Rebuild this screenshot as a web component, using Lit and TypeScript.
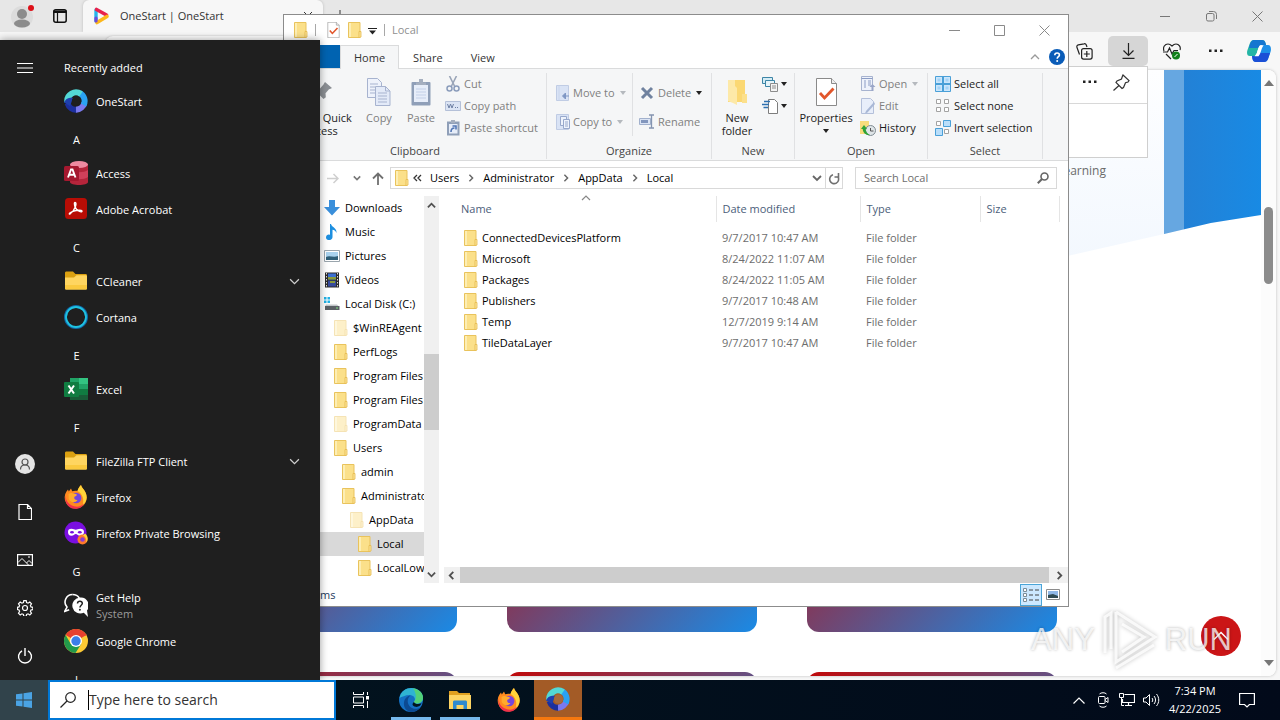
import { LitElement, html, svg, css, nothing } from "lit";
import { customElement } from "lit/decorators.js";
import { classMap } from "lit/directives/class-map.js";

/* ---------- shared icons ---------- */

const icon = (w: number, h: number, body: unknown, box = `0 0 ${w} ${h}`) =>
  html`<svg width=${w} height=${h} viewBox=${box} fill="none" aria-hidden="true">${body}</svg>`;

const folder = (faded = false, w = 14, h = 16) =>
  icon(
    w,
    h,
    svg`<g opacity=${faded ? 0.45 : 1}>
      <path d="M.5 .5h11.500v15H.5z" fill="#fbe08a" stroke="#e9c35c"/>
      <path d="M1 1h2v14H1z" fill="#fdeeb4"/>
      <path d="M11 9.500h2v5.500l-1.500 .5H11z" fill="#fde79c" stroke="#e5b94c" stroke-width=".8"/>
    </g>`,
    "0 0 14 16"
  );

const caret = (color = "#222") => icon(6, 4, svg`<path d="M0 0h6L3 4z" fill=${color}/>`);

const chevron = (dir: string, color = "#555", size = 10, weight = 1.5) => {
  const d: Record<string, string> = {
    up: "M1 7l4-4 4 4",
    down: "M1 3l4 4 4-4",
    left: "M7 1L3 5l4 4",
    right: "M3 1l4 4-4 4",
  };
  return icon(size, size, svg`<path d=${d[dir]} stroke=${color} stroke-width=${weight}/>`, "0 0 10 10");
};

const checkDoc = (w: number, h: number) =>
  icon(
    w,
    h,
    svg`<path d="M.5 .5h15l5 5v22H.5z" fill="#fff" stroke="#8a8a8a"/>
      <path d="M15.500 .5v5h5" fill="#eee" stroke="#8a8a8a"/>
      <path d="M4 15l4.500 5 9-9.500" stroke="#e2562b" stroke-width="2.800"/>`,
    "0 0 21 28"
  );

const oneStart = (size: number, hole: string) =>
  icon(
    size,
    size,
    svg`<path d="M3.600 14.500A8.700 8.700 0 0 0 13 20.600" stroke="#1c2f9e" stroke-width="6"/>
      <path d="M12 20.700A8.700 8.700 0 0 0 20.300 14" stroke="#7a79ee" stroke-width="6"/>
      <path d="M19.600 16A8.700 8.700 0 0 0 15.500 4" stroke="#2aa2f2" stroke-width="6"/>
      <path d="M3.300 13A8.700 8.700 0 0 1 17 5" stroke="#53d8d6" stroke-width="6"/>
      <path d="M0 13.500c2-4.500 6-5 9-4.500l-3 8z" fill="#1e3fae"/>
      <circle cx="12.500" cy="12" r="4.600" fill=${hole}/>`,
    "0 0 24 24"
  );

const firefox = (size: number) =>
  icon(
    size,
    size,
    svg`<path d="M2.500 6.500l1.500-2 .8 2L7 3.500l1.200 2.700C10 5.500 12 5.500 13.500 6c.6-2.500 2-4.500 3.500-6 .3 3 5.500 5.500 5.700 12.500A11 11 0 1 1 2.500 6.500z" fill="#ff8a1f"/>
      <path d="M17 0c.3 3 5.500 5.500 5.700 12.500-.2 3.500-2 6-4 7.500 1.500-5 .3-11-5.200-14 .6-2.500 2-4.500 3.500-6z" fill="#ffd43a"/>
      <path d="M1.500 10c0 7 4.500 10.500 9.500 11.500 4 .7 7-1 9-3-2 5-7 5.700-10 5.200C4.500 23 .5 18 1.500 10z" fill="#f2314b"/>
      <circle cx="12.200" cy="13" r="5.200" fill="#7446dd"/>
      <path d="M4.500 9c3-2 5 0 7.500 0 1.500 .3 1 2-1.500 2.700-1 2 .5 3.500 3 3.300-2 3.500-7.500 2.500-8.800-1z" fill="#ffab2c"/>`,
    "0 0 24 24"
  );

const logos: Record<string, unknown> = {
  onestart: oneStart(24, "#1f1f1f"),
  access: icon(
    24,
    24,
    svg`<path d="M6 3v18c0 4 18 4 18 0V3z" fill="#b5253b"/>
      <path d="M6 9c4 3 14 3 18 0v7c-4 3-14 3-18 0z" fill="#d0405a"/>
      <ellipse cx="15" cy="3.500" rx="9" ry="3.500" fill="#ee8aa0"/>
      <rect y="5" width="15" height="15" rx="1.500" fill="#a5182f"/>
      <path d="M4 16.500L7 8.500h1.500l3 8M5.300 13.800h4.600" stroke="#fff" stroke-width="1.900"/>`
  ),
  acrobat: icon(
    24,
    24,
    svg`<rect x="1" y="1" width="22" height="21" rx="3.500" fill="#b80d05"/>
      <path d="M11 5.500c2.500 0 0 8-5 11.500-1.500 .5-.5-1.500 3-2.700 4-1.300 9-1.600 9 0s-5.500-.3-7-4.600c-.7-2.200-.8-4.200 0-4.200z" stroke="#fff" stroke-width="1.400"/>`
  ),
  folder: icon(
    24,
    24,
    svg`<path d="M1 4c0-1 .5-1.500 1.500-1.500H9l2.500 2.500h10c1 0 1.500 .5 1.500 1.500v5H1z" fill="#dba011"/>
      <path d="M1 8.500h9l2.500-2.200h9c1 0 1.500 .5 1.500 1.500v11.200c0 1-.5 1.500-1.500 1.500h-19C1.500 20.500 1 20 1 19z" fill="#ffd560"/>
      <path d="M1 16h22v3c0 1-.5 1.500-1.500 1.500h-19C1.500 20.500 1 20 1 19z" fill="#fbc93f"/>`
  ),
  cortana: icon(24, 24, svg`<circle cx="12" cy="12" r="10.600" stroke="#1169a8" stroke-width="2.800"/><circle cx="12" cy="12" r="10" stroke="#1fc2e0" stroke-width="1.800"/>`),
  excel: icon(
    24,
    24,
    svg`<path d="M6 1h18v22H6z" fill="#21a366"/><path d="M15 1h9v6h-9z" fill="#33c481"/><path d="M6 12h9v11H6z" fill="#185c37"/>
      <path d="M15 12h9v6h-9z" fill="#107c41"/><path d="M15 18h9v5h-9z" fill="#185c37"/>
      <rect y="5" width="15" height="15" rx="1" fill="#107c41"/>
      <path d="M4.500 8.500l5.500 8M10 8.500l-5.500 8" stroke="#fff" stroke-width="2"/>`
  ),
  firefox: firefox(24),
  private: icon(
    24,
    24,
    svg`<circle cx="11.500" cy="11.500" r="11" fill="#7a0fe0"/>
      <path d="M7.500 7.800c2 0 3 1 4.300 1s2.500-1 4.500-1c2.500 0 3.700 1.200 3.700 3.200s-1.400 3.800-3.700 3.800c-2.200 0-3-1.800-4.500-1.800s-2.200 1.800-4.300 1.800C5 14.800 4 13 4 11s1-3.200 3.500-3.200z" fill="#fff"/>
      <ellipse cx="8" cy="11.300" rx="1.900" ry="1.300" fill="#7a0fe0"/><ellipse cx="15.800" cy="11.300" rx="1.900" ry="1.300" fill="#7a0fe0"/>
      <circle cx="18.500" cy="18.500" r="5" fill="#ff7a2b"/><circle cx="18.500" cy="18.500" r="2.300" fill="#8a3fd0"/><path d="M21 12.500c3 2 3.500 6 1.500 9-.2-4-1-6-3.500-7z" fill="#ffd43a"/>`
  ),
  help: icon(
    24,
    24,
    svg`<path d="M8.500 1.500a7.500 7.500 0 0 0-5.500 12.500l-2.300 4.500 4.500-1.700" stroke="#fff" stroke-width="1.600"/>
      <path d="M8.500 1.500c3 0 5.500 1.300 6.800 3.700" stroke="#fff" stroke-width="1.600"/>
      <path d="M16 4.500a8 8 0 1 0 3.800 15.200L24 24l-1-6.500A8 8 0 0 0 16 4.500z" fill="#fff"/>
      <path d="M13.500 10.500c.2-3 5-2.800 4.800 0-.1 1.700-2.400 1.800-2.400 4" stroke="#1f1f1f" stroke-width="1.500"/><circle cx="15.900" cy="16.800" r="1" fill="#1f1f1f"/>`
  ),
  chrome: icon(
    24,
    24,
    svg`<circle cx="12" cy="12" r="12" fill="#fcc934"/>
      <path d="M12 12L1.600 6A12 12 0 0 1 22.400 6z" fill="#e8402f"/>
      <path d="M12 12L6.800 15 1.600 6A12 12 0 0 0 11.500 24l5.700-9z" fill="#229a4b"/>
      <path d="M12 6h10.400" stroke="#e8402f" stroke-width="1"/>
      <circle cx="12" cy="12" r="6" fill="#fff"/><circle cx="12" cy="12" r="4.700" fill="#3c7de8"/>`
  ),
};

const base = css`
  * {
    box-sizing: border-box;
  }
  svg {
    display: block;
    flex: none;
  }
  button,
  input {
    font: inherit;
    color: inherit;
    background: none;
    border: 0;
    padding: 0;
    margin: 0;
    outline: 0;
  }
  button {
    text-align: left;
  }
  ul {
    list-style: none;
    margin: 0;
    padding: 0;
  }
`;

/* ---------- browser ---------- */

@customElement("browser-window")
export class BrowserWindow extends LitElement {
  static styles = [
    base,
    css`
      :host {
        display: flex;
        flex-direction: column;
        height: 100%;
        background: #f7f7f7;
        color: #333;
      }
      .strip {
        display: flex;
        align-items: stretch;
        height: 32px;
        background: #e7e7e7;
      }
      .profile,
      .tabs-menu {
        display: grid;
        place-items: center;
        width: 44px;
      }
      .tabs-menu {
        width: 32px;
        margin-right: 7px;
      }
      .tab {
        display: flex;
        align-items: center;
        gap: 10px;
        width: 240px;
        padding: 0 10px 0 11px;
        background: #f7f7f7;
        border-radius: 6px 6px 0 0;
        box-shadow: 0 0 3px #bbb;
      }
      .tab span {
        flex: 1;
      }
      .plus {
        width: 34px;
        display: grid;
        place-items: center;
      }
      .controls {
        display: flex;
        margin-left: auto;
      }
      .controls button {
        width: 46px;
        display: grid;
        place-items: center;
      }
      .bar {
        display: flex;
        align-items: center;
        height: 38px;
        padding-left: 105px;
        background: #f7f7f7;
      }
      .address {
        flex: 1;
        height: 30px;
        border-radius: 8px;
        background: #fff;
        box-shadow: 0 0 2px #bbb;
        margin-right: 20px;
      }
      .tool {
        display: grid;
        place-items: center;
        width: 44px;
        height: 30px;
      }
      .tool.on {
        width: 40px;
        margin: 0 2px;
        background: #d6d6d6;
        border-radius: 5px;
      }
      .tool.copilot {
        width: 42px;
      }
      .view {
        flex: 1;
        min-height: 0;
        display: flex;
        margin: 0 4px 4px;
        background: #fff;
        border-radius: 8px;
        box-shadow: 0 0 3px #bbb;
        overflow: hidden;
      }
      .page {
        flex: 1;
        min-width: 0;
        overflow: hidden;
      }
      .hero {
        display: flex;
        justify-content: flex-end;
        height: 190px;
        background: linear-gradient(#fdfeff, #f3f8fe);
        clip-path: polygon(0 0, 100% 0, 100% 145px, 96% 153px, 92.3% 164px, 84.6% 186px, 0 100%);
      }
      .hero p {
        margin: 92px 58px 0 0;
        font-size: 12px;
        line-height: 18px;
        color: #6b6b6b;
      }
      .photo {
        width: 97px;
        background: linear-gradient(to right, #66a7e1 20px, #2381d6 20px, #188ae4);
      }
      .cards {
        display: grid;
        grid-template-columns: repeat(3, 250px);
        justify-content: center;
        gap: 40px 50px;
        margin: 172px 2px 0 0;
      }
      .card {
        height: 200px;
        border-radius: 12px;
        background: linear-gradient(135deg, #c00808, #1a8ae5);
      }
      .scroll {
        width: 15px;
        display: flex;
        flex-direction: column;
        align-items: center;
        padding: 10px 0;
        background: #fcfcfc;
      }
      .thumb {
        width: 9px;
        height: 77px;
        margin: 121px 0 auto;
        border-radius: 5px;
        background: #8b8b8b;
      }
      .downloads {
        position: absolute;
        top: 66px;
        right: 132px;
        width: 320px;
        height: 92px;
        background: #fff;
        border: 1px solid #cfcfcf;
      }
      .downloads header {
        display: flex;
        justify-content: flex-end;
        align-items: center;
        gap: 16px;
        height: 37px;
        padding: 0 17px 6px 0;
        border-bottom: 1px solid #d8d8d8;
      }
      .top {
        position: absolute;
        right: 39px;
        bottom: 24px;
        width: 40px;
        height: 40px;
        border-radius: 50%;
        display: grid;
        place-items: center;
        background: #cb1517;
      }
    `,
  ];

  private dots = icon(14, 4, svg`<path d="M0 .5h2.500v2.500H0zM5.500 .5H8v2.500H5.500zM11 .5h2.500v2.500H11z" fill="#222"/>`);

  render() {
    return html`
      <header class="strip">
        <button class="profile" aria-label="Profile">
          ${icon(24, 26, svg`<circle cx="12" cy="14" r="11" fill="#dcdcdc"/><circle cx="12" cy="11" r="5" fill="#8c8c8c"/><ellipse cx="12" cy="20.500" rx="8" ry="4" fill="#8c8c8c"/><circle cx="21" cy="5" r="3" fill="#dd1018"/>`)}
        </button>
        <button class="tabs-menu" aria-label="Tab actions">
          ${icon(14, 14, svg`<rect x=".8" y=".8" width="12.400" height="12.400" rx="2" stroke="#111" stroke-width="1.500"/><path d="M1 2h12v1.500H1zM4.500 4v9" stroke="#111" fill="#111" stroke-width="1.200"/>`)}
        </button>
        <div class="tab">
          ${icon(16, 18, svg`<path d="M2 3v11" stroke="#26b4ea" stroke-width="3.400" stroke-linecap="round"/><path d="M2.500 2.500L12.500 8" stroke="#e8214c" stroke-width="3.600" stroke-linecap="round"/><path d="M3 15.500l10-6" stroke="#fdb71a" stroke-width="3.600" stroke-linecap="round"/><path d="M2 11v3" stroke="#6f4bd8" stroke-width="3.200" stroke-linecap="round"/>`)}
          <span>OneStart | OneStart</span>
          ${icon(10, 10, svg`<path d="M1 1l8 8M9 1L1 9" stroke="#333"/>`)}
        </div>
        <button class="plus" aria-label="New tab">${icon(12, 12, svg`<path d="M6 0v12M0 6h12" stroke="#333"/>`)}</button>
        <div class="controls">
          <button aria-label="Minimize">${icon(10, 10, svg`<path d="M0 5.500h10" stroke="#777"/>`)}</button>
          <button aria-label="Restore">${icon(11, 11, svg`<rect x=".5" y="2.500" width="7.500" height="7.500" rx="1.500" stroke="#777"/><path d="M3 .5h4.500a3 3 0 0 1 3 3V8" stroke="#777"/>`)}</button>
          <button aria-label="Close">${icon(11, 11, svg`<path d="M.5 .5l10 10M10.500 .5l-10 10" stroke="#777"/>`)}</button>
        </div>
      </header>
      <div class="bar">
        <div class="address"></div>
        <button class="tool" aria-label="Collections">
          ${icon(17, 17, svg`<rect x="5.600" y="5.600" width="10.500" height="10.500" rx="2" stroke="#222" stroke-width="1.200"/><path d="M10.800 8v6M7.800 11h6" stroke="#222" stroke-width="1.200"/><path d="M3.500 11.500L1 4.500a2 2 0 0 1 1.300-2.700L8 .8a2 2 0 0 1 2.300 1.200l.7 2" stroke="#222" stroke-width="1.200"/>`)}
        </button>
        <button class="tool on" aria-label="Downloads">
          ${icon(13, 16, svg`<path d="M6.500 0v12M1.500 7.500l5 5 5-5M.5 15.300h12" stroke="#222" stroke-width="1.200"/>`)}
        </button>
        <button class="tool" aria-label="Browser essentials">
          ${icon(18, 17, svg`<path d="M1 8C-.5 4 2 1 5 1c2 0 3 1 4 2 1-1 2-2 4-2 3 0 5 3 4 6M3 11l5 5" stroke="#222" stroke-width="1.200"/><path d="M0 9h4.500l2-4 2.500 6 2-3.500h4" stroke="#222" stroke-width="1.200"/><circle cx="13" cy="12.500" r="4" fill="#12801a"/><path d="M11.500 14l3-3" stroke="#fff"/>`)}
        </button>
        <button class="tool" aria-label="Settings">${this.dots}</button>
        <button class="tool copilot" aria-label="Copilot">
          ${icon(24, 24, svg`<path d="M7 1h8c2 0 3 1 3.500 3L19 6h-4c-2 0-3 1-3.600 3L9 17H3c-3 0-3.500-3-2.500-6L3 4c.8-2 2-3 4-3z" fill="#23b5a6"/><path d="M7 1h8c2 0 3 1 3.500 3L19 6h-4c-2 0-3 1-3.600 3H2l1-4c.8-2 2-4 4-4z" fill="#1576d0"/><path d="M17 23H9c-2 0-3-1-3.500-3L5 17h4c2 0 3-1 3.600-3L15 6h6c3 0 3.500 4 2.500 7L21 20c-.8 2-2 3-4 3z" fill="#1d8fe8"/><path d="M17 23H9c-2 0-3-1-3.500-3L5 17h4c2 0 3-1 3.600-3H23l-2 6c-.8 2-2 3-4 3z" fill="#1b4fd6"/><path d="M13.500 7.500c-1.500 1.500-1.600 6-3.500 8.500h1c1.500-1.500 2-6 3.500-8.500z" stroke="#fff" stroke-width="2.400"/>`)}
        </button>
      </div>
      <div class="view">
        <main class="page">
          <section class="hero">
            <p>Learning</p>
            <div class="photo"></div>
          </section>
          <section class="cards">${[0, 1, 2, 3, 4, 5].map(() => html`<article class="card"></article>`)}</section>
        </main>
        <div class="scroll">
          ${icon(10, 6, svg`<path d="M5 0l5 6H0z" fill="#777"/>`)}
          <div class="thumb"></div>
          ${icon(10, 6, svg`<path d="M5 6l5-6H0z" fill="#777"/>`)}
        </div>
      </div>
      <aside class="downloads">
        <header>
          ${this.dots}
          ${icon(17, 17, svg`<path d="M10 1l6 5.500-1 1.500-2.500 .8-2 4.700-1.500 1L3 8.500l1-1.500 4.500-2L9.500 2zM6 11.500L.5 16.500" stroke="#333" stroke-width="1.200"/>`)}
        </header>
      </aside>
      <button class="top" aria-label="Back to top">${icon(16, 10, svg`<path d="M1 8.500l7-7 7 7" stroke="#fff" stroke-width="1.500"/>`)}</button>
    `;
  }
}

/* ---------- file explorer ---------- */

const ribbonIcons: Record<string, unknown> = {
  pin: icon(24, 28, svg`<path d="M16 4l7 6-2 1-1 .3-3.500 4 .3 4-2.300 1.700-4-4L4 23l5-6.800-3.500-4L7 10l4 .5 3.500-4 .5-1z" fill="#8b8f94"/>`),
  copy: icon(
    24,
    28,
    svg`<g stroke="#a7b3cf"><path d="M.5 .5h10l4 4v15H.5z" fill="#eef2fb"/><path d="M8.500 8.500h10l4.500 4.500v14.500H8.500z" fill="#e3eaf8"/><path d="M18.500 8.500V13H23M3 6h8M3 9h5M3 12h5M3 15h5M11 15h9M11 18h9M11 21h9M11 24h9"/></g>`
  ),
  paste: icon(
    22,
    28,
    svg`<rect x="1.500" y="4" width="19" height="23.500" rx="1" fill="#8f9fb8"/><path d="M4 7h14v17H4z" fill="#e6edf9"/><path d="M6 4.500h10V7H6zM9 1h4v4H9z" fill="#a5afbf"/><path d="M6 11h10M6 14h10M6 17h10M6 20h10" stroke="#c3d0e8"/>`
  ),
  cut: icon(16, 16, svg`<path d="M4.500 0l5 10M11.500 0l-5 10" stroke="#9aa5b8" stroke-width="1.600"/><circle cx="4.500" cy="12.500" r="2.500" stroke="#8b9cbb" stroke-width="1.500"/><circle cx="11.500" cy="12.500" r="2.500" stroke="#8b9cbb" stroke-width="1.500"/>`),
  path: icon(16, 16, svg`<path d="M.5 3.500h15v9H.5z" fill="#dbe4f4" stroke="#b4c0d8"/><path d="M2.500 6l1.500 4 1.500-4L7 10l1.500-4M10 9.500h1M12 9.500h1" stroke="#6d7fa3"/>`),
  shortcut: icon(16, 16, svg`<rect x="2" y="1.500" width="12.500" height="14" fill="#8f9fb8"/><path d="M4 4h8.500v9.500H4z" fill="#e6edf9"/><path d="M6 0h4v3H6z" fill="#a5afbf"/><path d="M6 12c0-3 1-4 3.500-4M7.500 6H11v3.500" stroke="#5276b5" stroke-width="1.600"/>`),
  move: icon(14, 16, svg`<path d="M.5 .5h12v15H.5z" fill="#d9e3f5" stroke="#c0cce4"/><path d="M3 .5v15" stroke="#c9d5ec"/><path d="M13 11H8M9.500 8L6.500 11l3 3z" stroke="#7f97c4" fill="#7f97c4"/>`),
  copyto: icon(14, 16, svg`<path d="M.5 .5h12v15H.5z" fill="#d9e3f5" stroke="#c0cce4"/><path d="M4.500 2.500h6v9h-6z" fill="#eef3fc" stroke="#98a9cc"/><path d="M7.500 5.500h6v9h-6z" fill="#eef3fc" stroke="#98a9cc"/><path d="M9 8h3M9 10h3M9 12h3" stroke="#98a9cc"/>`),
  del: icon(16, 16, svg`<path d="M3 3l10 10M13 3L3 13" stroke="#70829f" stroke-width="3"/>`),
  rename: icon(16, 16, svg`<path d="M.5 4.500h11v6H.5z" fill="#dbe4f4" stroke="#a2b1cd"/><path d="M2 6h7v3H2z" fill="#8296bd"/><path d="M10 1h5M12.500 1v13M10 14h5" stroke="#8494b0" stroke-width="1.300"/>`),
  newfolder: icon(20, 28, svg`<path d="M1 2h17v22H1z" fill="#fbd873"/><path d="M1 2h7v6l2 2v17l-4-2-5-2z" fill="#fde9a8"/><path d="M15 16h5v9h-5z" fill="#fce08c"/>`),
  newitem: icon(16, 16, svg`<path d="M.5 1.500h10v6H.5z" fill="#d4ecf5" stroke="#3d85a6"/><path d="M3.500 4.500h9v6h-9z" fill="#e6f4fa" stroke="#3d85a6"/><path d="M8.500 7.500h7v8h-7z" fill="#f4f4f4" stroke="#8c8c8c"/><path d="M10 10h4M10 12h4" stroke="#8c8c8c"/>`),
  easy: icon(16, 16, svg`<path d="M6.500 1.500h6l3 3v11h-9z" fill="#fff" stroke="#7d7d7d"/><path d="M2 3.500h6M0 6.500h7M1.500 9.500H6" stroke="#2d6fb0" stroke-width="1.400"/>`),
  check: checkDoc(21, 28),
  open: icon(16, 16, svg`<path d="M1.500 .5h11v14h-11z" fill="#eef2fb" stroke="#a7b3cf"/><path d="M1.500 2.500h11M4 5h2M4 7h2M4 9h2M4 11h2M8 5h3M8 7h3M8 9h3" stroke="#8b9cc4"/><path d="M12.500 8l3 3h-2v4h-2v-4h-2z" fill="#9aa6c8"/>`),
  edit: icon(16, 16, svg`<path d="M1.500 .5h9l3 3v12h-12z" fill="#e8eefa" stroke="#b4c0da"/><path d="M14 4L6 13l-1 2.500 2.500-1L15 6z" fill="#a9b8d6"/>`),
  history: icon(16, 16, svg`<path d="M0 1h9v13H0z" fill="#f8dc7c"/><circle cx="10.500" cy="10.500" r="5" fill="#dfe5e8" stroke="#7f8b92"/><path d="M10.500 8v3h3" stroke="#555"/><path d="M1 9l3-4 3 4H5.500c.5 3 2 5 4.500 6-4 .5-7-2-7.300-6z" fill="#2fa338"/>`),
  all: icon(16, 16, svg`<path d="M.5 .5h15v15H.5z" fill="#cbe6fb" stroke="#4aa0d8"/><path d="M8 0v16M0 8h16" stroke="#4aa0d8" stroke-width="2"/><path d="M2.500 2.500h3v3h-3zM10.500 2.500h3v3h-3zM2.500 10.500h3v3h-3zM10.500 10.500h3v3h-3z" fill="#a4d3f7"/>`),
  none: icon(16, 16, svg`<path d="M1.500 1.500h4v4h-4zM9.500 1.500h4v4h-4zM1.500 9.500h4v4h-4zM9.500 9.500h4v4h-4z" stroke="#a3a3a3" fill="#fff"/>`),
  invert: icon(16, 16, svg`<path d="M1.500 1.500h4v4h-4zM9.500 9.500h4v4h-4z" stroke="#a3a3a3" fill="#fff"/><path d="M8.500 .5h7v6h-7zM.5 8.500h7v7h-7z" stroke="#4aa0d8" fill="#b9defa"/>`),
};

type Node = { name: string; level: number; kind?: string; faded?: boolean; current?: boolean };

@customElement("file-explorer")
export class FileExplorer extends LitElement {
  static styles = [
    base,
    css`
      :host {
        display: flex;
        flex-direction: column;
        background: #fff;
        border: 1px solid #8c8c8c;
        color: #1c1c1c;
      }
      .title {
        display: flex;
        align-items: center;
        height: 30px;
        padding: 0 1px 0 10px;
        color: #8f8f8f;
      }
      .title .rule {
        width: 1px;
        height: 12px;
        background: #a8a8a8;
        margin: 0 7px;
      }
      .title .check {
        margin: 0 8px 0 4px;
      }
      .title .more {
        margin: 2px 0 0 6px;
      }
      .controls {
        display: flex;
        margin-left: auto;
      }
      .controls button {
        width: 45px;
        height: 28px;
        display: grid;
        place-items: center;
      }
      .tabs {
        display: flex;
        height: 24px;
        border-bottom: 1px solid #dadbdc;
        color: #333;
      }
      .tabs button {
        height: 24px;
        padding: 0 13px;
        border: 1px solid transparent;
        border-width: 1px 1px 0;
      }
      .tabs .file {
        width: 56px;
        height: 23px;
        background: #0063b1;
        color: #fff;
      }
      .tabs .home {
        background: #f5f6f7;
        border-color: #dadbdc;
      }
      .tabs .end {
        display: flex;
        align-items: center;
        gap: 9px;
        margin-left: auto;
        padding-right: 3px;
      }
      .ribbon {
        display: flex;
        height: 92px;
        padding: 4px 0 0;
        background: #f5f6f7;
        border-bottom: 1px solid #dadbdc;
      }
      .group {
        display: flex;
        flex-direction: column;
        justify-content: space-between;
        height: 86px;
        border-right: 1px solid #e0e1e3;
      }
      .body {
        display: flex;
      }
      .caption {
        text-align: center;
        line-height: 16px;
        color: #444;
      }
      .clipboard {
        width: 263px;
      }
      .organize {
        width: 165px;
      }
      .new {
        width: 83px;
      }
      .open {
        width: 133px;
      }
      .select {
        width: 115px;
      }
      .big {
        display: flex;
        flex-direction: column;
        align-items: center;
        padding-top: 5px;
        width: 42px;
        line-height: 13px;
        text-align: center;
        white-space: nowrap;
      }
      .big svg:first-child {
        margin-bottom: 5px;
      }
      .big.wide {
        width: 74px;
      }
      .big.mid {
        width: 50px;
      }
      .big.props {
        width: 62px;
      }
      .big svg + span + svg {
        margin-top: 5px;
      }
      .list {
        display: flex;
        flex-direction: column;
        padding-left: 3px;
      }
      .list button {
        display: flex;
        align-items: center;
        gap: 3px;
        height: 22px;
        white-space: nowrap;
      }
      .new .list {
        padding-left: 0;
      }
      .select .list {
        padding-left: 7px;
      }
      .list.tall {
        padding: 5px 0 0 9px;
      }
      .list.tall button {
        height: 29px;
      }
      .list.first {
        width: 85px;
      }
      .list.second {
        padding-left: 6px;
        border-left: 1px solid #e0e1e3;
      }
      .list span {
        margin-right: 2px;
      }
      .off {
        color: #808080;
      }
      .nav {
        display: flex;
        align-items: center;
        height: 34px;
        padding: 0 11px 0 36px;
      }
      .nav > button {
        display: grid;
        place-items: center;
        width: 21px;
        height: 22px;
      }
      .nav .fwd {
        width: 26px;
      }
      .crumbs {
        flex: 1;
        display: flex;
        align-items: center;
        height: 22px;
        margin: 0 12px 0 2px;
        padding-left: 4px;
        border: 1px solid #d9d9d9;
      }
      .crumbs .trail {
        display: flex;
        align-items: center;
        gap: 8px;
        margin: 0 auto 0 4px;
        color: #000;
      }
      .crumbs .drop {
        padding-right: 3px;
      }
      .crumbs .reload {
        display: grid;
        place-items: center;
        width: 17px;
        height: 20px;
        border-left: 1px solid #d9d9d9;
      }
      .search {
        display: flex;
        align-items: center;
        width: 202px;
        height: 22px;
        padding: 0 7px 0 8px;
        border: 1px solid #d9d9d9;
      }
      .search input {
        flex: 1;
        min-width: 0;
      }
      .search input::placeholder {
        color: #6d6d6d;
        opacity: 1;
      }
      .main {
        flex: 1;
        min-height: 0;
        display: flex;
        padding-top: 1px;
      }
      .tree {
        width: 140px;
        overflow: hidden;
      }
      .tree li {
        display: flex;
        align-items: center;
        gap: 5px;
        height: 24px;
        padding-left: 40px;
        white-space: nowrap;
        color: #000;
      }
      .tree .l1 {
        padding-left: 50px;
      }
      .tree .l2 {
        padding-left: 58px;
      }
      .tree .l3 {
        padding-left: 66px;
      }
      .tree .l4 {
        padding-left: 74px;
      }
      .tree .current {
        background: #d9d9d9;
      }
      .vbar {
        display: flex;
        flex-direction: column;
        align-items: center;
        width: 15px;
        padding: 5px 0 4px;
        background: #f0f0f0;
      }
      .vbar i {
        width: 15px;
        height: 76px;
        margin: 144px 0 auto;
        background: #cdcdcd;
      }
      .files {
        flex: 1;
        min-width: 0;
        display: flex;
        flex-direction: column;
        padding-left: 5px;
      }
      table {
        width: 616px;
        table-layout: fixed;
        border-collapse: collapse;
        margin-bottom: auto;
      }
      th {
        height: 26px;
        padding: 0 0 0 6px;
        text-align: left;
        font-weight: 400;
        color: #4c607a;
        border-right: 1px solid #e5e5e5;
      }
      th:first-child {
        padding-left: 17px;
      }
      .sort {
        position: absolute;
        left: 297px;
        top: 178px;
      }
      .c1 {
        width: 272px;
      }
      .c2 {
        width: 144px;
      }
      .c3 {
        width: 120px;
      }
      td {
        height: 21px;
        padding: 0 0 0 6px;
        line-height: 16px;
        color: #6d6d6d;
      }
      tbody::before {
        content: "";
        display: block;
        height: 5px;
      }
      .name {
        display: flex;
        align-items: center;
        gap: 4px;
        padding-left: 14px;
        color: #000;
      }
      .hbar {
        display: flex;
        align-items: center;
        justify-content: space-between;
        height: 16px;
        padding: 0 4px 0 3px;
        background: #f0f0f0;
      }
      .hbar i {
        flex: 1;
        height: 16px;
        margin: 0 6px 0 4px;
        background: #cdcdcd;
      }
      .status {
        display: flex;
        align-items: center;
        height: 23px;
        padding: 0 4px 0 14px;
        color: #23395b;
      }
      .status .details {
        display: grid;
        place-items: center;
        width: 22px;
        height: 22px;
        margin-left: auto;
        background: #cce8ff;
        border: 1px solid #4aa5d8;
      }
      .status .thumbs {
        display: grid;
        place-items: center;
        width: 22px;
        height: 22px;
      }
    `,
  ];

  private tree: Node[] = [
    { name: "Downloads", level: 0, kind: "down" },
    { name: "Music", level: 0, kind: "music" },
    { name: "Pictures", level: 0, kind: "pic" },
    { name: "Videos", level: 0, kind: "video" },
    { name: "Local Disk (C:)", level: 0, kind: "disk" },
    { name: "$WinREAgent", level: 1, faded: true },
    { name: "PerfLogs", level: 1 },
    { name: "Program Files", level: 1 },
    { name: "Program Files (x86)", level: 1 },
    { name: "ProgramData", level: 1, faded: true },
    { name: "Users", level: 1 },
    { name: "admin", level: 2 },
    { name: "Administrator", level: 2 },
    { name: "AppData", level: 3, faded: true },
    { name: "Local", level: 4, current: true },
    { name: "LocalLow", level: 4 },
  ];

  private files = [
    ["ConnectedDevicesPlatform", "9/7/2017 10:47 AM"],
    ["Microsoft", "8/24/2022 11:07 AM"],
    ["Packages", "8/24/2022 11:05 AM"],
    ["Publishers", "9/7/2017 10:48 AM"],
    ["Temp", "12/7/2019 9:14 AM"],
    ["TileDataLayer", "9/7/2017 10:47 AM"],
  ];

  private kinds: Record<string, unknown> = {
    down: icon(16, 16, svg`<path d="M5 0h6v7h5l-8 8.500L0 7h5z" fill="#3a8fdb"/>`),
    music: icon(16, 16, svg`<path d="M7 0c.5 3 6 4 5.500 9-.7-2-2-3-4-3.300V13c0 4-6.500 4-6.500 .5C2 11 4.500 10 6 11V0z" fill="#1d8fe0"/>`),
    pic: icon(16, 16, svg`<path d="M.5 2.500h15v11H.5z" fill="#fff" stroke="#9aa5ad"/><path d="M2 4h12v8H2z" fill="#a9d2ee"/><path d="M2 9c4-2 7 1 12-1v4H2z" fill="#2f5f78"/>`),
    video: icon(16, 16, svg`<path d="M1 .5h14v15H1z" fill="#2b2b2b"/><path d="M4 1.500h8v6H4z" fill="#3c6fd0"/><path d="M4 8.500h8v6H4z" fill="#364a9c"/><path d="M4 5h8v2.500H4zM6 9h5v2H6z" fill="#8a9a3a"/><path d="M2.500 1v15M13.500 1v15" stroke="#ddd" stroke-dasharray="1.500 1.500"/>`),
    disk: icon(16, 16, svg`<path d="M0 1h2.500v2.500H0zM3.500 1H6v2.500H3.500zM0 4.500h2.500V7H0zM3.500 4.500H6V7H3.500z" fill="#21b2e6"/><path d="M2 8.500h11l2 2H1z" fill="#c3c7ca"/><path d="M1 10h14.500v4H1z" fill="#5b6166"/><path d="M12 12h2" stroke="#7fe07f"/>`),
  };

  private row(name: string, label: string, off = false, drop = false) {
    return html`<button class=${classMap({ off })}>
      ${ribbonIcons[name]}<span>${label}</span>${drop ? caret(off ? "#b5b9be" : "#333") : nothing}
    </button>`;
  }

  render() {
    return html`
      <header class="title">
        ${folder()}
        <div class="rule"></div>
        <div class="check">${checkDoc(13, 16)}</div>
        ${folder()}
        <div class="more">${icon(9, 7, svg`<path d="M0 .5h9" stroke="#222"/><path d="M1 2.500h7L4.500 6.500z" fill="#222"/>`)}</div>
        <div class="rule"></div>
        <span>Local</span>
        <div class="controls">
          <button aria-label="Minimize">${icon(11, 11, svg`<path d="M0 5.500h11" stroke="#8a8a8a"/>`)}</button>
          <button aria-label="Maximize">${icon(11, 11, svg`<path d="M.5 .5h10v10H.5z" stroke="#8a8a8a"/>`)}</button>
          <button aria-label="Close">${icon(11, 11, svg`<path d="M.5 .5l10 10M10.500 .5l-10 10" stroke="#8a8a8a"/>`)}</button>
        </div>
      </header>
      <nav class="tabs">
        <button class="file">File</button><button class="home">Home</button><button>Share</button><button>View</button>
        <div class="end">
          ${chevron("up", "#9a9a9a", 10, 1.3)}
          ${icon(16, 16, svg`<circle cx="8" cy="8" r="8" fill="#0a5cb8"/><path d="M5.800 6.200c0-3 4.600-2.800 4.600-.2 0 1.700-2.200 1.700-2.200 3.800" stroke="#fff" stroke-width="1.600"/><circle cx="8.200" cy="12" r="1" fill="#fff"/>`)}
        </div>
      </nav>
      <section class="ribbon">
        <div class="group clipboard">
          <div class="body">
            <button class="big wide">${ribbonIcons.pin}<span>Pin to Quick<br />access</span></button>
            <button class="big off">${ribbonIcons.copy}<span>Copy</span></button>
            <button class="big off">${ribbonIcons.paste}<span>Paste</span></button>
            <div class="list">
              ${this.row("cut", "Cut", true)} ${this.row("path", "Copy path", true)} ${this.row("shortcut", "Paste shortcut", true)}
            </div>
          </div>
          <div class="caption">Clipboard</div>
        </div>
        <div class="group organize">
          <div class="body">
            <div class="list tall first">${this.row("move", "Move to", true, true)} ${this.row("copyto", "Copy to", true, true)}</div>
            <div class="list tall second">
              <button class="off">${ribbonIcons.del}<span>Delete</span>${caret()}</button>
              ${this.row("rename", "Rename", true)}
            </div>
          </div>
          <div class="caption">Organize</div>
        </div>
        <div class="group new">
          <div class="body">
            <button class="big mid">${ribbonIcons.newfolder}<span>New<br />folder</span></button>
            <div class="list">
              <button aria-label="New item">${ribbonIcons.newitem}${caret()}</button>
              <button aria-label="Easy access">${ribbonIcons.easy}${caret()}</button>
            </div>
          </div>
          <div class="caption">New</div>
        </div>
        <div class="group open">
          <div class="body">
            <button class="big props">${ribbonIcons.check}<span>Properties</span>${caret()}</button>
            <div class="list">${this.row("open", "Open", true, true)} ${this.row("edit", "Edit", true)} ${this.row("history", "History")}</div>
          </div>
          <div class="caption">Open</div>
        </div>
        <div class="group select">
          <div class="body">
            <div class="list">
              ${this.row("all", "Select all")} ${this.row("none", "Select none")} ${this.row("invert", "Invert selection")}
            </div>
          </div>
          <div class="caption">Select</div>
        </div>
      </section>
      <div class="nav">
        <button class="fwd" aria-label="Forward">${icon(12, 11, svg`<path d="M0 5.500h11M6.500 1l4.500 4.500L6.500 10" stroke="#cfcfcf" stroke-width="1.500"/>`)}</button>
        <button aria-label="Recent locations">${chevron("down", "#777", 8, 2)}</button>
        <button aria-label="Up">${icon(12, 13, svg`<path d="M6 13V2M1 6.500l5-5 5 5" stroke="#707070" stroke-width="1.800"/>`)}</button>
        <div class="crumbs">
          ${folder()}
          <div class="trail">
            ${icon(9, 8, svg`<path d="M4 1L1 4l3 3M8 1L5 4l3 3" stroke="#333" stroke-width="1.300"/>`)}
            <span>Users</span>${chevron("right", "#666", 8, 1.8)}
            <span>Administrator</span>${chevron("right", "#666", 8, 1.8)}
            <span>AppData</span>${chevron("right", "#666", 8, 1.8)}
            <span>Local</span>
          </div>
          <div class="drop">${chevron("down", "#666", 10, 1.8)}</div>
          <button class="reload" aria-label="Refresh">
            ${icon(12, 13, svg`<path d="M9.800 4.500A4.500 4.500 0 1 1 5 2.800M10.500 1v4H6.500" stroke="#707070" stroke-width="1.600"/>`)}
          </button>
        </div>
        <label class="search">
          <input type="text" placeholder="Search Local" aria-label="Search Local" />
          ${icon(12, 12, svg`<circle cx="7.500" cy="4.500" r="3.500" stroke="#666" stroke-width="1.600"/><path d="M5 7L.8 11.200" stroke="#666" stroke-width="2"/>`)}
        </label>
      </div>
      <div class="main">
        <ul class="tree">
          ${this.tree.map(
            (n) => html`<li class=${classMap({ [`l${n.level}`]: true, current: !!n.current })}>
              ${n.kind ? this.kinds[n.kind] : folder(n.faded)}<span>${n.name}</span>
            </li>`
          )}
        </ul>
        <div class="vbar">${chevron("up", "#505050", 9, 2)}<i></i>${chevron("down", "#505050", 9, 2)}</div>
        <div class="files">
          <table>
            <colgroup>
              <col class="c1" /><col class="c2" /><col class="c3" /><col />
            </colgroup>
            <thead>
              <tr><th>Name</th><th>Date modified</th><th>Type</th><th>Size</th></tr>
            </thead>
            <tbody>
              ${this.files.map(
                ([name, date]) => html`<tr>
                  <td><div class="name">${folder()}<span>${name}</span></div></td>
                  <td>${date}</td>
                  <td>File folder</td>
                  <td></td>
                </tr>`
              )}
            </tbody>
          </table>
          <div class="sort">${chevron("up", "#888", 10, 1.2)}</div>
          <div class="hbar">${chevron("left", "#505050", 9, 2)}<i></i>${chevron("right", "#505050", 9, 2)}</div>
        </div>
      </div>
      <footer class="status">
        <span>6 items</span>
        <button class="details" aria-label="Details view">
          ${icon(16, 14, svg`<path d="M.5 .5h3v3h-3zM.5 5.500h3v3h-3zM.5 10.500h3v3h-3z" stroke="#7b8c98" fill="#fff"/><path d="M6 2h4M12 2h4M6 7h4M12 7h4M6 12h4M12 12h4" stroke="#444"/>`)}
        </button>
        <button class="thumbs" aria-label="Large icons view">
          ${icon(14, 11, svg`<path d="M.5 .5h13v10H.5z" fill="#fff" stroke="#8b8b8b"/><path d="M2 2h10v7H2z" fill="#8fb7e6"/><path d="M2 6l5-1 5 2v2H2z" fill="#2f4a52"/>`)}
        </button>
      </footer>
    `;
  }
}

/* ---------- start menu ---------- */

@customElement("start-menu")
export class StartMenu extends LitElement {
  static styles = [
    base,
    css`
      :host {
        display: flex;
        background: #1f1f1f;
        color: #fff;
        box-shadow: 0 0 8px rgba(0, 0, 0, 0.4);
        overflow: hidden;
      }
      .rail {
        display: flex;
        flex-direction: column;
        width: 48px;
        padding-top: 4px;
      }
      .rail button {
        display: grid;
        place-items: center;
        height: 48px;
        width: 50px;
      }
      .rail .menu {
        margin-bottom: auto;
      }
      .apps {
        flex: 1;
        padding: 12px 20px 0 16px;
      }
      h2 {
        margin: 0;
        font: inherit;
        line-height: 32px;
      }
      h3 {
        margin: 0;
        height: 36px;
        width: 25px;
        font: inherit;
        line-height: 39px;
        text-align: center;
      }
      .app {
        display: flex;
        align-items: center;
        gap: 8px;
        width: 100%;
        height: 36px;
        padding-bottom: 2px;
      }
      .label {
        flex: 1;
        padding-top: 2px;
        line-height: 16px;
      }
      .label small {
        display: block;
        font-size: 11px;
        color: #9b9b9b;
      }
    `,
  ];

  private apps: [string, [string, string, string?][]][] = [
    ["Recently added", [["OneStart", "onestart"]]],
    ["A", [["Access", "access"], ["Adobe Acrobat", "acrobat"]]],
    ["C", [["CCleaner", "folder"], ["Cortana", "cortana"]]],
    ["E", [["Excel", "excel"]]],
    ["F", [["FileZilla FTP Client", "folder"], ["Firefox", "firefox"], ["Firefox Private Browsing", "private"]]],
    ["G", [["Get Help", "help", "System"], ["Google Chrome", "chrome"]]],
    ["I", []],
  ];

  render() {
    return html`
      <nav class="rail">
        <button class="menu" aria-label="Menu">${icon(16, 10, svg`<path d="M0 .5h16M0 5h16M0 9.500h16" stroke="#fff"/>`)}</button>
        <button aria-label="Account">${icon(20, 20, svg`<circle cx="10" cy="10" r="10" fill="#e4e4e4"/><circle cx="10" cy="8" r="3" stroke="#555" stroke-width="1.200"/><path d="M5.500 15.500c0-6 9-6 9 0" stroke="#555" stroke-width="1.200"/>`)}</button>
        <button aria-label="Documents">${icon(14, 16, svg`<path d="M1 .5h8.500l4 4v11H1zM9.500 .5v4h4" stroke="#fff" stroke-width="1.200"/>`)}</button>
        <button aria-label="Pictures">${icon(16, 12, svg`<path d="M.6 .6h14.800v10.800H.6z" stroke="#fff" stroke-width="1.200"/><path d="M1 8.500l4-4 6.500 6.500M9.500 9l2.500-2.500 3 3" stroke="#fff"/><path d="M11 3h2" stroke="#fff"/>`)}</button>
        <button aria-label="Settings">
          ${icon(16, 16, svg`<circle cx="8" cy="8" r="2.500" stroke="#fff" stroke-width="1.200"/><path d="M6.800 .6h2.400l.4 2 1.500.6 1.700-1.100 1.700 1.700-1.100 1.700.6 1.400 1.900.4v2.300l-1.900.4-.6 1.500 1.100 1.700-1.700 1.700-1.700-1.100-1.500.6-.4 2H6.800l-.4-2-1.500-.6-1.700 1.100-1.700-1.700 1.100-1.700-.6-1.500-1.500-.4V7.300L2 6.900l.6-1.400-1.100-1.700 1.700-1.700 1.700 1.100 1.500-.6z" stroke="#fff" stroke-width="1.200"/>`)}
        </button>
        <button aria-label="Power">${icon(16, 16, svg`<path d="M5 2.800a6.500 6.500 0 1 0 6 0M8 0v8" stroke="#fff" stroke-width="1.400"/>`)}</button>
      </nav>
      <div class="apps">
        ${this.apps.map(
          ([head, list], i) => html`${i === 0 ? html`<h2>${head}</h2>` : html`<h3>${head}</h3>`}
          ${list.map(
            ([name, logo, sub]) => html`<button class="app">
              ${logos[logo]}<span class="label">${name}${sub ? html`<small>${sub}</small>` : nothing}</span>
              ${logo === "folder" ? chevron("down", "#d0d0d0", 11, 1.1) : nothing}
            </button>`
          )}`
        )}
      </div>
    `;
  }
}

/* ---------- taskbar ---------- */

@customElement("task-bar")
export class TaskBar extends LitElement {
  static styles = [
    base,
    css`
      :host {
        display: flex;
        height: 40px;
        background: linear-gradient(to right, #02151f, #020a1a);
        color: #fff;
      }
      button {
        display: grid;
        place-items: center;
        width: 49px;
        height: 40px;
      }
      .start {
        width: 48px;
        background: #31434b;
      }
      .search {
        display: flex;
        align-items: center;
        gap: 12px;
        width: 288px;
        padding: 0 10px;
        background: #fff;
        border: 2px solid #0078d7;
      }
      .search input {
        flex: 1;
        min-width: 0;
        height: 20px;
        border-left: 1px solid #000;
        font-size: 14px;
        line-height: 20px;
      }
      .search input::placeholder {
        color: #333;
        opacity: 1;
      }
      .view {
        margin-right: 1px;
      }
      .running {
        background: linear-gradient(#76b9ed, #76b9ed) center bottom / 40px 3px no-repeat;
      }
      .active {
        width: 48px;
        margin-left: 1px;
        background: #a35b26;
        border-bottom: 3px solid #f5780f;
      }
      .tray {
        display: flex;
        align-items: center;
        margin-left: auto;
        padding-right: 13px;
      }
      .tray button {
        width: 24px;
      }
      time {
        width: 64px;
        text-align: center;
        line-height: 18px;
      }
      .tray .notify {
        width: 40px;
      }
    `,
  ];

  render() {
    return html`
      <button class="start" aria-label="Start">
        ${icon(16, 16, svg`<path d="M0 2.300L6.500 1.400v6.100H0zM7.500 1.200L16 0v7.500H7.500zM0 8.500h6.500v6.100L0 13.700zM7.500 8.500H16V16l-8.500-1.200z" fill="#4aa3e4"/>`)}
      </button>
      <label class="search">
        ${icon(16, 16, svg`<circle cx="10.500" cy="5.500" r="4.800" stroke="#222" stroke-width="1.200"/><path d="M7 9L.5 15.500" stroke="#222" stroke-width="1.200"/>`)}
        <input type="text" placeholder="Type here to search" aria-label="Type here to search" />
      </label>
      <button class="view" aria-label="Task view">
        ${icon(16, 16, svg`<path d="M.5 0v2.500h10V0M.5 16v-2.500h10V16M.5 5h10v6H.5zM14.500 0v3M14.500 9v7" stroke="#fff"/><path d="M13 4h3v3.500h-3z" fill="#fff"/>`)}
      </button>
      <button class="running" aria-label="Edge">
        ${icon(24, 24, svg`<circle cx="12" cy="12" r="12" fill="#1470c4"/><path d="M.5 10C2 3 7 0 12.500 0 19 0 24 4.500 24 9.500c0 4-3 6-6 6-3.500 0-3.500-1.500-2.500-2.500 1.500-2-.5-6-5-6-4 0-8 2-10 3z" fill="#2fb4d2"/><path d="M14 .2c6 .8 10 5 10 9.300 0 4-3 6-6 6-3.500 0-3.500-1.500-2.500-2.500 2-2 2-8-1.500-12.800z" fill="#52d178"/><path d="M11.500 7.500c-4 3-3.500 9 .5 12 3 2 7 1.500 9.500-.3-2 3-5.500 4.800-9.500 4.800-6-1-7.500-6-7-9.500.5-4 3-6.500 6.500-7z" fill="#0c4a92"/><path d="M15 14c1 2.500 5 2.500 7.500 1.300-1 2.700-3.500 4-6 3.500-3-.5-4-3-1.500-4.800z" fill="#02151f"/>`)}
      </button>
      <button class="running" aria-label="File Explorer">
        ${icon(22, 20, svg`<path d="M0 1h8l2 2h11v5H0z" fill="#e0a020"/><path d="M0 5h22v14H0z" fill="#fdd463"/><path d="M4 19v-7c0-1 .7-1.500 1.500-1.500h11c.8 0 1.500 .5 1.500 1.500v7h-3.500v-4h-7v4z" fill="#2f8ad0"/>`)}
      </button>
      <button aria-label="Firefox">${firefox(24)}</button>
      <button class="active" aria-label="OneStart">${oneStart(24, "#a8693a")}</button>
      <div class="tray">
        <button aria-label="Show hidden icons">${icon(12, 7, svg`<path d="M.5 6.500L6 1l5.500 5.500" stroke="#fff" stroke-width="1.200"/>`)}</button>
        <button aria-label="Meet now">${icon(12, 16, svg`<rect x="1.500" y="4.500" width="6.500" height="7" rx="1" stroke="#fff"/><path d="M8 7.500l3-2v5l-3-2M2.500 2C4 .3 8 .3 9.500 2M2.500 14c1.500 1.700 5.500 1.700 7 0" stroke="#fff"/>`)}</button>
        <button aria-label="Network">${icon(16, 14, svg`<path d="M5.500 1.500h10v8h-12V6M9.500 9.500v3M6 12.500h7" stroke="#fff" stroke-width="1.200"/><path d="M.5 .5h4v4h-4zM2.500 4.500v8H5" stroke="#fff"/>`)}</button>
        <button aria-label="Volume">${icon(17, 14, svg`<path d="M.5 5h2.500l3.500-3.500v11L3 9H.5z" stroke="#fff"/><path d="M9 5c1 1.200 1 2.800 0 4M11 3c2 2.500 2 5.500 0 8M13.500 1c3 3.700 3 8.300 0 12" stroke="#fff"/>`)}</button>
        <time>7:34 PM<br />4/22/2025</time>
        <button class="notify" aria-label="Notifications">${icon(16, 16, svg`<path d="M.6 1.500h14.800v11h-5L8 15l-2.500-2.500H.6z" stroke="#fff" stroke-width="1.200"/>`)}</button>
      </div>
    `;
  }
}

/* ---------- desktop ---------- */

@customElement("app-root")
export class AppRoot extends LitElement {
  static styles = [
    base,
    css`
      :host {
        display: flex;
        flex-direction: column;
        height: 100vh;
        overflow: hidden;
        font: 11px/16px "Open Sans", "Noto Sans", sans-serif;
      }
      .desktop {
        flex: 1;
        min-height: 0;
        position: relative;
        overflow: hidden;
      }
      file-explorer {
        position: absolute;
        left: 283px;
        top: 14px;
        width: 786px;
        height: 593px;
      }
      start-menu {
        position: absolute;
        left: 0;
        top: 40px;
        bottom: 0;
        width: 320px;
      }
      .mark {
        position: absolute;
        right: 48px;
        bottom: 6px;
        display: flex;
        align-items: center;
        gap: 7px;
        font: 31px/68px "Liberation Sans", sans-serif;
        color: rgba(255, 255, 255, 0.75);
        text-shadow: 0 0 3px rgba(0, 0, 0, 0.3);
        pointer-events: none;
      }
      .mark svg {
        filter: drop-shadow(0 0 2px rgba(0, 0, 0, 0.3));
      }
    `,
  ];

  render() {
    return html`
      <div class="desktop">
        <browser-window></browser-window>
        <file-explorer></file-explorer>
        <div class="mark">
          <span>ANY</span>
          ${icon(56, 62, svg`<path d="M3 44V8l6-4v36M14 3l39 25-39 25V3M20 15l22 13-22 15M14 59l38-23" stroke="#fff" stroke-opacity=".8" stroke-width="3"/>`)}
          <span>RUN</span>
        </div>
        <start-menu></start-menu>
      </div>
      <task-bar></task-bar>
    `;
  }
}
